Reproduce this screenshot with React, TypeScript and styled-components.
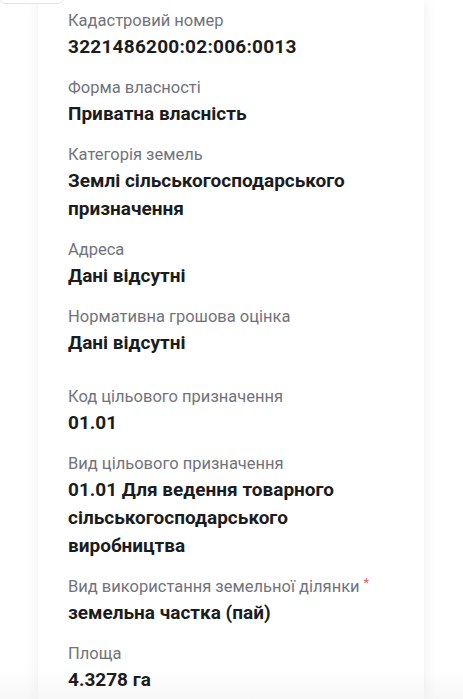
import styled, { createGlobalStyle } from 'styled-components';

const GlobalStyle = createGlobalStyle`
  html, body {
    margin: 0;
    padding: 0;
    background: #ffffff;
    font-family: Roboto, "Noto Sans", "Liberation Sans", sans-serif;
  }
`;

type Field = {
  label: string;
  value: string[];
  required?: boolean;
  spaced?: boolean;
  wide?: boolean;
};

const fields: Field[] = [
  { label: 'Кадастровий номер', value: ['3221486200:02:006:0013'], wide: true },
  { label: 'Форма власності', value: ['Приватна власність'] },
  { label: 'Категорія земель', value: ['Землі сільськогосподарського', 'призначення'] },
  { label: 'Адреса', value: ['Дані відсутні'] },
  { label: 'Нормативна грошова оцінка', value: ['Дані відсутні'] },
  { label: 'Код цільового призначення', value: ['01.01'], spaced: true },
  {
    label: 'Вид цільового призначення',
    value: ['01.01 Для ведення товарного', 'сільськогосподарського', 'виробництва'],
  },
  { label: 'Вид використання земельної ділянки', value: ['земельна частка (пай)'], required: true },
  { label: 'Площа', value: ['4.3278 га'] },
];

export default function App() {
  return (
    <>
      <GlobalStyle />
      <Page>
        <BackTab />
        <Card>
          {fields.map((f) => (
            <FieldBlock key={f.label} $spaced={f.spaced}>
              <Label>
                {f.label}
                {f.required && <Required>*</Required>}
              </Label>
              <Value $wide={f.wide}>
                {f.value.map((line) => (
                  <div key={line}>{line}</div>
                ))}
              </Value>
            </FieldBlock>
          ))}
        </Card>
        <BottomFade />
      </Page>
    </>
  );
}

const Page = styled.div`
  position: relative;
  height: 699px;
  overflow: hidden;
  background: #ffffff;
`;

const BackTab = styled.div`
  position: absolute;
  left: -2px;
  top: -30px;
  width: 65px;
  height: 32px;
  border: 1px solid #e3e3e6;
  border-radius: 8px;
  background: #ffffff;
  z-index: 2;
`;

const Card = styled.section`
  margin-left: 38px;
  width: 386px;
  min-height: 699px;
  box-sizing: border-box;
  padding: 11px 20px 0 30px;
  background: #ffffff;
  box-shadow: 0 0 14px rgba(0, 0, 0, 0.07);
  display: flex;
  flex-direction: column;
  gap: 17px;
`;

const FieldBlock = styled.div<{ $spaced?: boolean }>`
  display: flex;
  flex-direction: column;
  gap: 2px;
  margin-top: ${(p) => (p.$spaced ? '13px' : '0')};
`;

const Label = styled.div`
  font-size: 16.5px;
  line-height: 20px;
  color: #71737c;
`;

const Required = styled.span`
  color: #e0606a;
  font-size: 13px;
  vertical-align: top;
  margin-left: 4px;
  position: relative;
  top: -4px;
`;

const Value = styled.div<{ $wide?: boolean }>`
  font-size: 19px;
  line-height: 28px;
  font-weight: 700;
  color: #1b1c20;
  letter-spacing: ${(p) => (p.$wide ? '0.25px' : '0')};
`;

const BottomFade = styled.div`
  position: absolute;
  left: 0;
  right: 0;
  bottom: 0;
  height: 30px;
  background: linear-gradient(to bottom, rgba(0, 0, 0, 0), rgba(0, 0, 0, 0.03));
  pointer-events: none;
`;
